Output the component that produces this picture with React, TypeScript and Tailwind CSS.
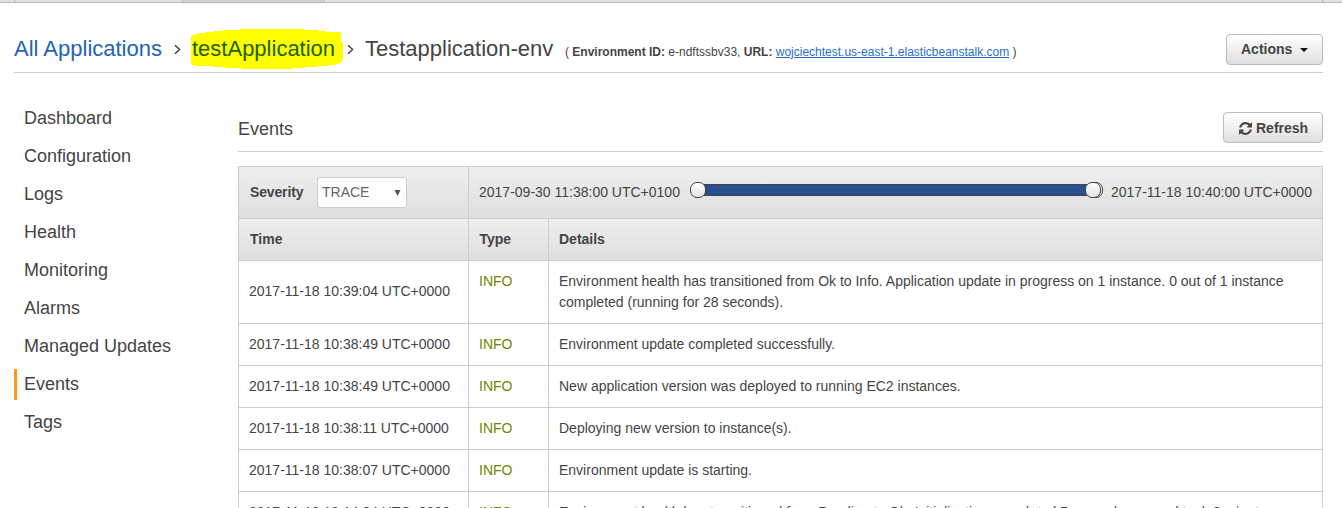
import React from 'react';

const navItems = ['Dashboard', 'Configuration', 'Logs', 'Health', 'Monitoring', 'Alarms', 'Managed Updates', 'Events', 'Tags'];

const events = [
  { time: '2017-11-18 10:39:04 UTC+0000', details: 'Environment health has transitioned from Ok to Info. Application update in progress on 1 instance. 0 out of 1 instance completed (running for 28 seconds).', tall: true },
  { time: '2017-11-18 10:38:49 UTC+0000', details: 'Environment update completed successfully.' },
  { time: '2017-11-18 10:38:49 UTC+0000', details: 'New application version was deployed to running EC2 instances.' },
  { time: '2017-11-18 10:38:11 UTC+0000', details: 'Deploying new version to instance(s).' },
  { time: '2017-11-18 10:38:07 UTC+0000', details: 'Environment update is starting.' },
  { time: '2017-11-18 10:14:34 UTC+0000', details: 'Environment health has transitioned from Pending to Ok. Initialization completed 5 seconds ago and took 3 minutes.' },
];

const buttonClass =
  'flex h-[31px] shrink-0 items-center rounded-[4px] border border-[#bbb] bg-linear-to-b from-white to-[#dfdfdf] text-[14px] font-bold text-[#444]';

function Chevron({ className }: { className: string }) {
  return (
    <svg className={`h-[11px] w-[7px] shrink-0 ${className}`} viewBox="0 0 7 11" fill="none" stroke="#444" strokeWidth="1.5">
      <path d="M1 1.2 5.6 5.5 1 9.8" />
    </svg>
  );
}

function RefreshIcon() {
  return (
    <svg className="mr-[4px] h-[13px] w-[13px]" viewBox="0 0 1536 1536" fill="#444">
      <path d="M1511 928q0 5-1 7-64 268-268 434.500T764 1536q-146 0-282.500-55T238 1324l-129 129q-19 19-45 19t-45-19-19-45V960q0-26 19-45t45-19h448q26 0 45 19t19 45-19 45l-137 137q71 66 161 102t187 36q134 0 250-65t186-179q11-17 53-117 8-23 30-23h192q13 0 22.500 9.500t9.500 22.500zm25-800v448q0 26-19 45t-45 19h-448q-26 0-45-19t-19-45 19-45l138-138Q969 256 768 256q-134 0-250 65T332 500q-11 17-53 117-8 23-30 23H50q-13 0-22.500-9.500T18 608v-7q65-268 270-434.500T768 0q146 0 284 55.500T1297 212l130-129q19-19 45-19t45 19 19 45z" />
    </svg>
  );
}

function Knob({ className = '' }: { className?: string }) {
  return <span className={`block h-4 w-4 rounded-[7px] border border-[#444] bg-linear-to-b from-white to-[#e2e2e2] ${className}`} />;
}

export default function App() {
  return (
    <div className="h-[508px] overflow-hidden bg-white font-['Liberation_Sans',Arial,sans-serif] text-[14px] text-[#444]">
      <div className="flex h-[3px] border-b border-[#bbb] bg-[#e2e2e2]">
        <div className="w-[15px] border-r border-[#bbb]" />
        <div className="w-[166px]" />
        <div className="w-[144px] border-r border-[#bbb] bg-[#d0d0d0]" />
        <div className="w-[998px] border-r border-[#bbb]" />
      </div>
      <div className="h-[3px] bg-linear-to-b from-[#f5f5f5] to-white" />

      <header className="mr-[19px] ml-[14px] flex h-[67px] items-center border-b border-[#ccc] pt-[20px] whitespace-nowrap">
        <a className="w-[148px] shrink-0 text-[22px] leading-[32px] text-[#1f63b8]">All Applications</a>
        <Chevron className="ml-[12px]" />
        <a className="relative ml-[10px] h-[40px] w-[153px] shrink-0">
          <svg className="absolute inset-0 h-full w-full" viewBox="0 0 153 40" fill="#ff0" shapeRendering="crispEdges">
            <path d="M0 7Q6 4 19 3Q42 0 72 0H92Q122 0 139 3H150V13H152V30Q151 34 144 36Q120 38 95 40H60Q36 39 17 37H5L0 35Z" />
          </svg>
          <span className="relative block pl-[1px] text-[22px] leading-[40px] text-[#1f6100]">testApplication</span>
        </a>
        <Chevron className="ml-[3px]" />
        <span className="ml-[11px] w-[200px] shrink-0 text-[22px] leading-[32px]">Testapplication-env</span>
        <span className="pt-[6px] text-[12px]">
          ( <b>Environment ID:</b> e-ndftssbv33, <b>URL:</b> <a className="text-[#2a6fc9] underline">wojciechtest.us-east-1.elasticbeanstalk.com</a> )
        </span>
        <button className={`${buttonClass} ml-auto w-[97px] pt-[1px] pl-[14px]`}>
          Actions
          <span className="ml-[8px] border-x-[4px] border-t-[4px] border-x-transparent border-t-black" />
        </button>
      </header>

      <div className="flex pr-[19px] pl-[14px]">
        <nav className="flex w-[224px] shrink-0 flex-col gap-[7px] pt-[30px] text-[18px]">
          {navItems.map((item) => (
            <a key={item} className={`h-[31px] border-l-[3px] pl-[7px] leading-[31px] ${item === 'Events' ? 'border-[#ff9914]' : 'border-transparent'}`}>
              {item}
            </a>
          ))}
        </nav>

        <main className="min-w-0 flex-1 pt-[39px]">
          <div className="flex h-[40px] items-start justify-between border-b border-[#ccc]">
            <h2 className="text-[18px] leading-[34px]">Events</h2>
            <button className={`${buttonClass} w-[100px] pt-[1px] pl-[15px]`}>
              <RefreshIcon />
              Refresh
            </button>
          </div>

          <section className="mt-[14px] border-t border-l border-[#ccc]">
            <div className="flex h-[52px] border-b border-[#ccc] bg-linear-to-b from-[#eee] to-[#dfdfdf]">
              <div className="flex w-[230px] shrink-0 items-center border-r border-[#ccc] pl-[11px]">
                <b className="w-[67px] tracking-[-0.15px]">Severity</b>
                <div className="flex h-[31px] w-[90px] items-center justify-between rounded-[3px] border border-[#ccc] bg-[#fdfdfd] pr-[5px] pl-[4px] text-[#666]">
                  TRACE
                  <svg className="h-[6px] w-[7px]" viewBox="0 0 7 6" fill="#555"><path d="M.5 0H6.500L3.500 6Z" /></svg>
                </div>
              </div>
              <div className="flex flex-1 items-center border-r border-[#ccc] pl-[10px] whitespace-nowrap">
                <span className="w-[211px] shrink-0">2017-09-30 11:38:00 UTC+0100</span>
                <div className="mb-[5px] flex w-[413px] items-center">
                  <Knob className="relative z-10" />
                  <span className="-ml-[8px] h-[12px] w-[395px] border-y border-[#444] bg-[#284f8f]" />
                  <div className="relative -ml-[8px] h-4 w-[18px]">
                    <Knob className="absolute top-0 left-[2px]" />
                    <Knob className="absolute top-0 left-0" />
                  </div>
                </div>
                <span className="ml-[8px]">2017-11-18 10:40:00 UTC+0000</span>
              </div>
            </div>
            <div className="flex h-[42px] border-b border-[#ccc] bg-linear-to-b from-[#eee] to-[#dfdfdf] font-bold leading-[41px]">
              <div className="w-[230px] border-r border-[#ccc] pl-[11px]">Time</div>
              <div className="w-[80px] border-r border-[#ccc] pl-[10.5px]">Type</div>
              <div className="flex-1 border-r border-[#ccc] pl-[10px]">Details</div>
            </div>
            {events.map((event, index) => (
              <div key={index} className={`flex border-b border-[#ccc] leading-[21px] ${event.tall ? 'h-[63px]' : 'h-[42px]'}`}>
                <div className={`flex w-[230px] shrink-0 items-center border-r border-[#ccc] pl-[10px] ${event.tall ? 'pb-[2px]' : ''}`}>{event.time}</div>
                <div className="w-[80px] shrink-0 border-r border-[#ccc] pt-[10px] pl-[10px] text-[#6c8700]">INFO</div>
                <div className="flex-1 border-r border-[#ccc] pt-[10px] pr-[30px] pl-[10px]">{event.details}</div>
              </div>
            ))}
          </section>
        </main>
      </div>
    </div>
  );
}
